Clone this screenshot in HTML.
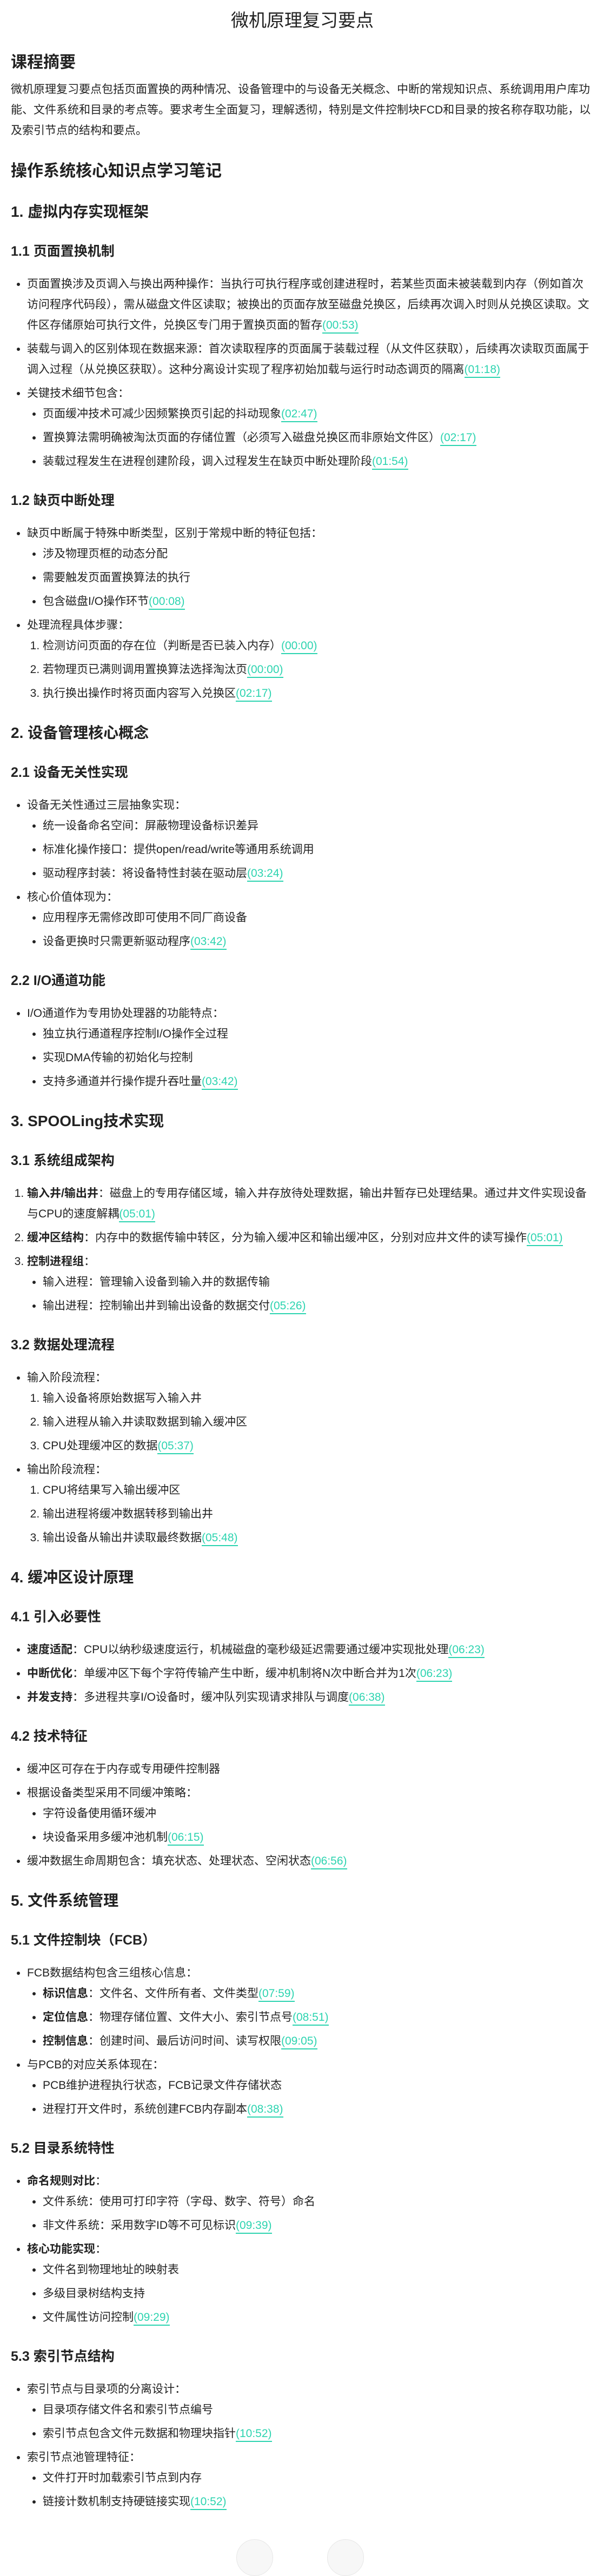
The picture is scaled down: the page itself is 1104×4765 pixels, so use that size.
<!DOCTYPE html>
<html><head><meta charset="utf-8">
<style>
html,body{margin:0;padding:0;background:#fff;}
body{width:1104px;height:4701px;overflow:hidden;position:relative;font-family:"Liberation Sans","Noto Sans CJK SC",sans-serif;color:#222;font-size:21px;line-height:38px;}
.wrap{padding:0 6px 0 20px;}
h1{font-size:33px;font-weight:normal;text-align:center;line-height:44px;margin:16px 0 0;}
h2{font-size:30px;line-height:42px;margin:35px 0 10px;font-weight:bold;}
h2.b{margin-bottom:0;}
h3{font-size:28px;line-height:40px;margin:34px 0 0;font-weight:bold;}
h4{font-size:25px;line-height:36px;margin:35px 0 24px;font-weight:bold;}
p{margin:0;}
ul,ol{margin:0;padding-left:30px;}
ul{list-style:disc;}
li ul,li ol{padding-left:29px;}
li ul{list-style:disc;}
li+li{margin-top:6px;}
li>ul>li:first-child,li>ol>li:first-child{margin-top:0;}
.t{color:#2dd4b0;border-bottom:2px solid #2dd4b0;padding-bottom:2px;}
b{font-weight:bold;}
.c{position:absolute;top:4681px;width:66px;height:66px;border-radius:50%;background:#f7f7f7;border:1px solid #e6e6e6;}
</style></head><body>
<div class="wrap">
<h1>微机原理复习要点</h1>
<h2>课程摘要</h2>
<p>微机原理复习要点包括页面置换的两种情况、设备管理中的与设备无关概念、中断的常规知识点、系统调用用户库功能、文件系统和目录的考点等。要求考生全面复习，理解透彻，特别是文件控制块FCD和目录的按名称存取功能，以及索引节点的结构和要点。</p>
<h2 class="b">操作系统核心知识点学习笔记</h2>
<h3>1. 虚拟内存实现框架</h3>
<h4>1.1 页面置换机制</h4>
<ul>
<li>页面置换涉及页调入与换出两种操作：当执行可执行程序或创建进程时，若某些页面未被装载到内存（例如首次访问程序代码段），需从磁盘文件区读取；被换出的页面存放至磁盘兑换区，后续再次调入时则从兑换区读取。文件区存储原始可执行文件，兑换区专门用于置换页面的暂存<span class="t">(00:53)</span></li>
<li>装载与调入的区别体现在数据来源：首次读取程序的页面属于装载过程（从文件区获取），后续再次读取页面属于调入过程（从兑换区获取）。这种分离设计实现了程序初始加载与运行时动态调页的隔离<span class="t">(01:18)</span></li>
<li>关键技术细节包含：
<ul>
<li>页面缓冲技术可减少因频繁换页引起的抖动现象<span class="t">(02:47)</span></li>
<li>置换算法需明确被淘汰页面的存储位置（必须写入磁盘兑换区而非原始文件区）<span class="t">(02:17)</span></li>
<li>装载过程发生在进程创建阶段，调入过程发生在缺页中断处理阶段<span class="t">(01:54)</span></li>
</ul></li>
</ul>
<h4>1.2 缺页中断处理</h4>
<ul>
<li>缺页中断属于特殊中断类型，区别于常规中断的特征包括：
<ul>
<li>涉及物理页框的动态分配</li>
<li>需要触发页面置换算法的执行</li>
<li>包含磁盘I/O操作环节<span class="t">(00:08)</span></li>
</ul></li>
<li>处理流程具体步骤：
<ol>
<li>检测访问页面的存在位（判断是否已装入内存）<span class="t">(00:00)</span></li>
<li>若物理页已满则调用置换算法选择淘汰页<span class="t">(00:00)</span></li>
<li>执行换出操作时将页面内容写入兑换区<span class="t">(02:17)</span></li>
</ol></li>
</ul>
<h3>2. 设备管理核心概念</h3>
<h4>2.1 设备无关性实现</h4>
<ul>
<li>设备无关性通过三层抽象实现：
<ul>
<li>统一设备命名空间：屏蔽物理设备标识差异</li>
<li>标准化操作接口：提供open/read/write等通用系统调用</li>
<li>驱动程序封装：将设备特性封装在驱动层<span class="t">(03:24)</span></li>
</ul></li>
<li>核心价值体现为：
<ul>
<li>应用程序无需修改即可使用不同厂商设备</li>
<li>设备更换时只需更新驱动程序<span class="t">(03:42)</span></li>
</ul></li>
</ul>
<h4>2.2 I/O通道功能</h4>
<ul>
<li>I/O通道作为专用协处理器的功能特点：
<ul>
<li>独立执行通道程序控制I/O操作全过程</li>
<li>实现DMA传输的初始化与控制</li>
<li>支持多通道并行操作提升吞吐量<span class="t">(03:42)</span></li>
</ul></li>
</ul>
<h3>3. SPOOLing技术实现</h3>
<h4>3.1 系统组成架构</h4>
<ol>
<li><b>输入井/输出井</b>：磁盘上的专用存储区域，输入井存放待处理数据，输出井暂存已处理结果。通过井文件实现设备与CPU的速度解耦<span class="t">(05:01)</span></li>
<li><b>缓冲区结构</b>：内存中的数据传输中转区，分为输入缓冲区和输出缓冲区，分别对应井文件的读写操作<span class="t">(05:01)</span></li>
<li><b>控制进程组</b>：
<ul>
<li>输入进程：管理输入设备到输入井的数据传输</li>
<li>输出进程：控制输出井到输出设备的数据交付<span class="t">(05:26)</span></li>
</ul></li>
</ol>
<h4>3.2 数据处理流程</h4>
<ul>
<li>输入阶段流程：
<ol>
<li>输入设备将原始数据写入输入井</li>
<li>输入进程从输入井读取数据到输入缓冲区</li>
<li>CPU处理缓冲区的数据<span class="t">(05:37)</span></li>
</ol></li>
<li>输出阶段流程：
<ol>
<li>CPU将结果写入输出缓冲区</li>
<li>输出进程将缓冲数据转移到输出井</li>
<li>输出设备从输出井读取最终数据<span class="t">(05:48)</span></li>
</ol></li>
</ul>
<h3>4. 缓冲区设计原理</h3>
<h4>4.1 引入必要性</h4>
<ul>
<li><b>速度适配</b>：CPU以纳秒级速度运行，机械磁盘的毫秒级延迟需要通过缓冲实现批处理<span class="t">(06:23)</span></li>
<li><b>中断优化</b>：单缓冲区下每个字符传输产生中断，缓冲机制将N次中断合并为1次<span class="t">(06:23)</span></li>
<li><b>并发支持</b>：多进程共享I/O设备时，缓冲队列实现请求排队与调度<span class="t">(06:38)</span></li>
</ul>
<h4>4.2 技术特征</h4>
<ul>
<li>缓冲区可存在于内存或专用硬件控制器</li>
<li>根据设备类型采用不同缓冲策略：
<ul>
<li>字符设备使用循环缓冲</li>
<li>块设备采用多缓冲池机制<span class="t">(06:15)</span></li>
</ul></li>
<li>缓冲数据生命周期包含：填充状态、处理状态、空闲状态<span class="t">(06:56)</span></li>
</ul>
<h3>5. 文件系统管理</h3>
<h4>5.1 文件控制块（FCB）</h4>
<ul>
<li>FCB数据结构包含三组核心信息：
<ul>
<li><b>标识信息</b>：文件名、文件所有者、文件类型<span class="t">(07:59)</span></li>
<li><b>定位信息</b>：物理存储位置、文件大小、索引节点号<span class="t">(08:51)</span></li>
<li><b>控制信息</b>：创建时间、最后访问时间、读写权限<span class="t">(09:05)</span></li>
</ul></li>
<li>与PCB的对应关系体现在：
<ul>
<li>PCB维护进程执行状态，FCB记录文件存储状态</li>
<li>进程打开文件时，系统创建FCB内存副本<span class="t">(08:38)</span></li>
</ul></li>
</ul>
<h4>5.2 目录系统特性</h4>
<ul>
<li><b>命名规则对比</b>：
<ul>
<li>文件系统：使用可打印字符（字母、数字、符号）命名</li>
<li>非文件系统：采用数字ID等不可见标识<span class="t">(09:39)</span></li>
</ul></li>
<li><b>核心功能实现</b>：
<ul>
<li>文件名到物理地址的映射表</li>
<li>多级目录树结构支持</li>
<li>文件属性访问控制<span class="t">(09:29)</span></li>
</ul></li>
</ul>
<h4>5.3 索引节点结构</h4>
<ul>
<li>索引节点与目录项的分离设计：
<ul>
<li>目录项存储文件名和索引节点编号</li>
<li>索引节点包含文件元数据和物理块指针<span class="t">(10:52)</span></li>
</ul></li>
<li>索引节点池管理特征：
<ul>
<li>文件打开时加载索引节点到内存</li>
<li>链接计数机制支持硬链接实现<span class="t">(10:52)</span></li>
</ul></li>
</ul>
</div>
<div class="c" style="left:437px"></div>
<div class="c" style="left:605px"></div>
</body></html>
